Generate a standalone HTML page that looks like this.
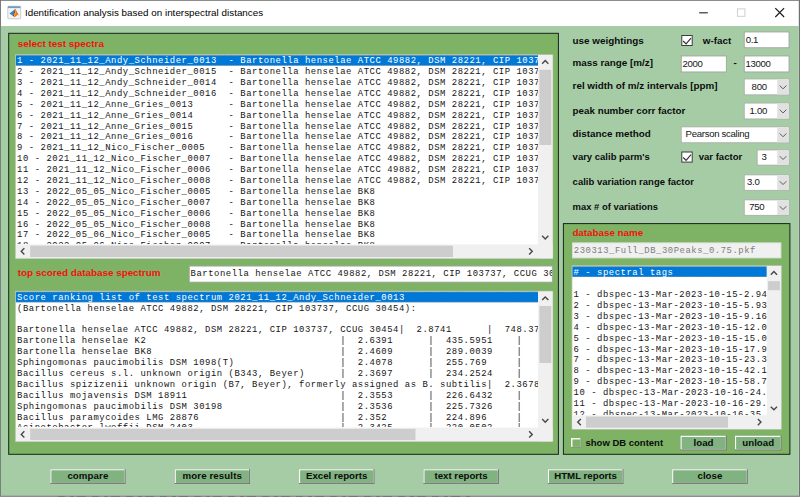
<!DOCTYPE html>
<html lang="en"><head><meta charset="utf-8"><title>Identification analysis based on interspectral distances</title>
<style>
*{box-sizing:border-box;margin:0;padding:0}
html,body{width:800px;height:497px;overflow:hidden;background:#fff}
body{position:relative;font-family:"Liberation Sans",sans-serif;color:#151515}
#shapes{position:absolute;left:0;top:0}
.t{position:absolute;white-space:pre;line-height:12px;font-size:9.6px;letter-spacing:-0.3px}
.b{font-weight:bold;font-size:9.85px;letter-spacing:0;color:#0c0c0c}
.b.red{color:#f3100c}
.red{color:#f3100c}
.c{text-align:center}
.clip{position:absolute;overflow:hidden}
.rows{position:absolute;left:0;top:0;font-family:"Liberation Mono",monospace;font-size:8.9px;letter-spacing:0.550px}
.rows div{height:10.9px;line-height:10.9px;white-space:pre}
.rows .sel{color:#fff}
.mono{font-family:"Liberation Mono",monospace;font-size:8.9px;letter-spacing:0.550px}
</style></head>
<body>
<svg id="shapes" width="800" height="497" viewBox="0 0 800 497">
<rect x="0" y="0" width="800" height="497" fill="#6f736f"/>
<rect x="0.9" y="0.8" width="797.9" height="494.8" fill="#fff"/>
<rect x="0.9" y="26" width="797.9" height="469.6" fill="#a6cca6"/>
<rect x="0" y="495.6" width="800" height="1.4" fill="#8b908b"/>
<rect x="0" y="0.8" width="0.9" height="25.2" fill="#7b7b7b"/>
<rect x="0" y="26" width="0.9" height="469.6" fill="#76837a"/>
<path d="M58 496.7 H470" stroke="#3c463c" stroke-width="0.8" fill="none" stroke-dasharray="7 5 4 3 9 6" opacity="0.5"/>
<g transform="translate(7.45,5.9)">
<rect x="0.3" y="0.3" width="12.9" height="12.6" rx="0.8" fill="#f1f3f6" stroke="#b4bbc4" stroke-width="0.7"/>
<rect x="0.5" y="0.4" width="12.5" height="1.8" fill="#6f9bc4"/>
<path d="M2.0 7.7 L7.3 3.5 L6.3 8.9 L5.0 9.5 Z" fill="#3a80c6"/>
<path d="M7.2 3.6 L7.8 2.9 L7.8 6.0 L6.3 10.7 L5.0 9.5 L6.2 8.8 Z" fill="#8a2a1c"/>
<path d="M7.8 2.9 C8.6 3.8 9.4 6.2 11.5 9.6 L10.0 8.9 L8.4 10.6 L6.0 11.4 L6.3 10.6 L7.6 6.0 Z" fill="#ec6f1c"/>
<path d="M7.9 3.6 L8.6 6.8 L7.3 10.2 L6.0 11.4 L6.8 9.0 L7.7 6 Z" fill="#f7b52c"/>
</g>
<path d="M699.2 12.8 H707.8" stroke="#333" stroke-width="1.2" fill="none"/>
<rect x="737.5" y="8.9" width="7.4" height="7.4" fill="none" stroke="#cfcfcf" stroke-width="1"/>
<path d="M775.3 8.2 L784.1 17 M784.1 8.2 L775.3 17" stroke="#1a1a1a" stroke-width="1.2" fill="none"/>
<rect x="8.7" y="33.3" width="549.7" height="421" fill="#7eb365" stroke="#16241a" stroke-width="1"/>
<rect x="15.5" y="54.8" width="537.3" height="203.8" fill="#fff" stroke="#bcc4b8" stroke-width="0.8"/>
<rect x="15.9" y="55.2" width="522.2" height="10.5" fill="#0078d7"/>
<path d="M16.1 55.5 H538.1 M16.1 65.5 H538.1" stroke="#e8a25a" stroke-width="0.6" fill="none" stroke-dasharray="0.9 0.9" opacity="0.8"/>
<rect x="538.1" y="55.2" width="14.3" height="203" fill="#f0f0f0"/>
<rect x="15.9" y="244.4" width="536.5" height="13.8" fill="#f0f0f0"/>
<rect x="539.4" y="69.8" width="11.9" height="75.2" fill="#cdcdcd"/>
<rect x="30.2" y="245.6" width="422.8" height="11.5" fill="#cdcdcd"/>
<path d="M542.15 63.65 L545.25 60.55 L548.35 63.65" stroke="#484848" stroke-width="1.4" fill="none"/>
<path d="M542.15 235.85 L545.25 238.95 L548.35 235.85" stroke="#484848" stroke-width="1.4" fill="none"/>
<path d="M24.35 248.2 L21.25 251.3 L24.35 254.4" stroke="#484848" stroke-width="1.4" fill="none"/>
<path d="M529.15 248.2 L532.25 251.3 L529.15 254.4" stroke="#484848" stroke-width="1.4" fill="none"/>
<rect x="189.25" y="266.05" width="363.1" height="16.1" fill="#fff" stroke="#9ea49e" stroke-width="0.9"/>
<rect x="15.5" y="291.2" width="537.3" height="150.4" fill="#fff" stroke="#bcc4b8" stroke-width="0.8"/>
<rect x="15.9" y="291.8" width="522.2" height="10.5" fill="#0078d7"/>
<path d="M16.1 292.1 H538.1 M16.1 302.1 H538.1" stroke="#e8a25a" stroke-width="0.6" fill="none" stroke-dasharray="0.9 0.9" opacity="0.8"/>
<rect x="538.1" y="291.6" width="14.3" height="149.6" fill="#f0f0f0"/>
<rect x="15.9" y="427.6" width="536.5" height="13.6" fill="#f0f0f0"/>
<rect x="539.4" y="306" width="11.9" height="57" fill="#cdcdcd"/>
<rect x="30.2" y="428.8" width="385.3" height="11.3" fill="#cdcdcd"/>
<path d="M542.15 300.05 L545.25 296.95 L548.35 300.05" stroke="#484848" stroke-width="1.4" fill="none"/>
<path d="M542.15 419.05 L545.25 422.15 L548.35 419.05" stroke="#484848" stroke-width="1.4" fill="none"/>
<path d="M24.35 431.3 L21.25 434.4 L24.35 437.5" stroke="#484848" stroke-width="1.4" fill="none"/>
<path d="M529.15 431.3 L532.25 434.4 L529.15 437.5" stroke="#484848" stroke-width="1.4" fill="none"/>
<rect x="681.8" y="35.5" width="10.4" height="10" fill="#fff" stroke="#3c3c3c" stroke-width="1"/>
<path d="M683.2 41 L686.1 43.9 L691 38.1" stroke="#333" stroke-width="1.15" fill="none"/>
<rect x="744.25" y="31.95" width="44.8" height="15.8" fill="#fff" stroke="#9ea49e" stroke-width="0.9"/>
<rect x="681.25" y="55.95" width="45.1" height="16" fill="#fff" stroke="#9ea49e" stroke-width="0.9"/>
<rect x="744.25" y="55.95" width="44.8" height="16" fill="#fff" stroke="#9ea49e" stroke-width="0.9"/>
<rect x="744.25" y="78.95" width="44.8" height="15.9" fill="#fff" stroke="#a9afa9" stroke-width="0.9"/>
<rect x="777.2" y="79.3" width="11.5" height="15.2" fill="#e1e1e1"/>
<path d="M779.75 85.55 L783.05 88.85 L786.35 85.55" stroke="#5a5a5a" stroke-width="1" fill="none"/>
<rect x="744.25" y="103.05" width="44.8" height="15.9" fill="#fff" stroke="#a9afa9" stroke-width="0.9"/>
<rect x="777.2" y="103.4" width="11.5" height="15.2" fill="#e1e1e1"/>
<path d="M779.75 109.65 L783.05 112.95 L786.35 109.65" stroke="#5a5a5a" stroke-width="1" fill="none"/>
<rect x="681.25" y="126.85" width="107.8" height="15.9" fill="#fff" stroke="#a9afa9" stroke-width="0.9"/>
<rect x="777.2" y="127.2" width="11.5" height="15.2" fill="#e1e1e1"/>
<path d="M779.75 133.45 L783.05 136.75 L786.35 133.45" stroke="#5a5a5a" stroke-width="1" fill="none"/>
<rect x="681.8" y="152" width="10.4" height="10.1" fill="#fff" stroke="#3c3c3c" stroke-width="1"/>
<path d="M683.2 157.5 L686.1 160.4 L691 154.6" stroke="#333" stroke-width="1.15" fill="none"/>
<rect x="757.15" y="149.95" width="31.9" height="15.2" fill="#fff" stroke="#a9afa9" stroke-width="0.9"/>
<rect x="777.2" y="150.3" width="11.5" height="14.5" fill="#e1e1e1"/>
<path d="M779.75 156.2 L783.05 159.5 L786.35 156.2" stroke="#5a5a5a" stroke-width="1" fill="none"/>
<rect x="744.25" y="174.85" width="44.8" height="15.5" fill="#fff" stroke="#a9afa9" stroke-width="0.9"/>
<rect x="777.2" y="175.2" width="11.5" height="14.8" fill="#e1e1e1"/>
<path d="M779.75 181.25 L783.05 184.55 L786.35 181.25" stroke="#5a5a5a" stroke-width="1" fill="none"/>
<rect x="744.25" y="199.85" width="44.8" height="15.5" fill="#fff" stroke="#a9afa9" stroke-width="0.9"/>
<rect x="777.2" y="200.2" width="11.5" height="14.8" fill="#e1e1e1"/>
<path d="M779.75 206.25 L783.05 209.55 L786.35 206.25" stroke="#5a5a5a" stroke-width="1" fill="none"/>
<rect x="563.4" y="223.6" width="226.5" height="230.7" fill="#7eb365" stroke="#16241a" stroke-width="1"/>
<rect x="572.45" y="242.85" width="208.5" height="15.1" fill="#f0f0f0" stroke="#d9dfd5" stroke-width="0.9"/>
<rect x="572" y="265.8" width="209.4" height="163.4" fill="#fff" stroke="#bcc4b8" stroke-width="0.8"/>
<rect x="572.4" y="266.4" width="194.4" height="10.5" fill="#0078d7"/>
<path d="M572.6 266.7 H766.8 M572.6 276.7 H766.8" stroke="#e8a25a" stroke-width="0.6" fill="none" stroke-dasharray="0.9 0.9" opacity="0.8"/>
<rect x="766.8" y="266.2" width="14.2" height="162.6" fill="#f0f0f0"/>
<rect x="572.4" y="415.3" width="208.6" height="13.5" fill="#f0f0f0"/>
<rect x="768.1" y="281.2" width="11.8" height="9" fill="#cdcdcd"/>
<rect x="586" y="416.5" width="142" height="11.2" fill="#cdcdcd"/>
<path d="M770.8 274.65 L773.9 271.55 L777 274.65" stroke="#484848" stroke-width="1.4" fill="none"/>
<path d="M770.8 406.75 L773.9 409.85 L777 406.75" stroke="#484848" stroke-width="1.4" fill="none"/>
<path d="M580.85 418.95 L577.75 422.05 L580.85 425.15" stroke="#484848" stroke-width="1.4" fill="none"/>
<path d="M757.85 418.95 L760.95 422.05 L757.85 425.15" stroke="#484848" stroke-width="1.4" fill="none"/>
<rect x="571" y="438" width="10.3" height="9.8" fill="#8d908d"/>
<rect x="571" y="438" width="9.4" height="8.9" fill="#f7f7f7"/>
<rect x="572.5" y="439.5" width="7.9" height="7.4" fill="#7eb365"/>
<rect x="680.5" y="435.7" width="46.1" height="14.6" fill="#6a6f6a"/>
<rect x="680.5" y="435.7" width="45.2" height="13.7" fill="#fbfdfb"/>
<rect x="681.8" y="437" width="43.9" height="12.4" fill="#9aa89a"/>
<rect x="681.8" y="437" width="43" height="11.5" fill="#80b380"/>
<rect x="735" y="435.7" width="46.4" height="14.6" fill="#6a6f6a"/>
<rect x="735" y="435.7" width="45.5" height="13.7" fill="#fbfdfb"/>
<rect x="736.3" y="437" width="44.2" height="12.4" fill="#9aa89a"/>
<rect x="736.3" y="437" width="43.3" height="11.5" fill="#80b380"/>
<rect x="50.3" y="469.2" width="75.2" height="14.8" fill="#6a6f6a"/>
<rect x="50.3" y="469.2" width="74.3" height="13.9" fill="#fbfdfb"/>
<rect x="51.6" y="470.5" width="73" height="12.6" fill="#9aa89a"/>
<rect x="51.6" y="470.5" width="72.1" height="11.7" fill="#80b380"/>
<rect x="174.6" y="469.2" width="75.4" height="14.8" fill="#6a6f6a"/>
<rect x="174.6" y="469.2" width="74.5" height="13.9" fill="#fbfdfb"/>
<rect x="175.9" y="470.5" width="73.2" height="12.6" fill="#9aa89a"/>
<rect x="175.9" y="470.5" width="72.3" height="11.7" fill="#80b380"/>
<rect x="299" y="469.2" width="75.4" height="14.8" fill="#6a6f6a"/>
<rect x="299" y="469.2" width="74.5" height="13.9" fill="#fbfdfb"/>
<rect x="300.3" y="470.5" width="73.2" height="12.6" fill="#9aa89a"/>
<rect x="300.3" y="470.5" width="72.3" height="11.7" fill="#80b380"/>
<rect x="423.4" y="469.2" width="75.4" height="14.8" fill="#6a6f6a"/>
<rect x="423.4" y="469.2" width="74.5" height="13.9" fill="#fbfdfb"/>
<rect x="424.7" y="470.5" width="73.2" height="12.6" fill="#9aa89a"/>
<rect x="424.7" y="470.5" width="72.3" height="11.7" fill="#80b380"/>
<rect x="547.8" y="469.2" width="75.6" height="14.8" fill="#6a6f6a"/>
<rect x="547.8" y="469.2" width="74.7" height="13.9" fill="#fbfdfb"/>
<rect x="549.1" y="470.5" width="73.4" height="12.6" fill="#9aa89a"/>
<rect x="549.1" y="470.5" width="72.5" height="11.7" fill="#80b380"/>
<rect x="672.1" y="469.2" width="75.6" height="14.8" fill="#6a6f6a"/>
<rect x="672.1" y="469.2" width="74.7" height="13.9" fill="#fbfdfb"/>
<rect x="673.4" y="470.5" width="73.4" height="12.6" fill="#9aa89a"/>
<rect x="673.4" y="470.5" width="72.5" height="11.7" fill="#80b380"/>
</svg>
<div class="t " style="left:24.9px;top:7px;font-size:9.8px;color:#000;letter-spacing:0.035px">Identification analysis based on interspectral distances</div>
<div class="t b red" style="left:17.7px;top:37.7px;font-size:9.9px">select test spectra</div>
<div class="clip" style="left:16px;top:55.2px;width:522.1px;height:189.2px"><div class="rows" style="left:1px;top:1px">
<div class="sel">1 - 2021_11_12_Andy_Schneider_0013  - Bartonella henselae ATCC 49882, DSM 28221, CIP 103737, CCUG 30454</div><div>2 - 2021_11_12_Andy_Schneider_0015  - Bartonella henselae ATCC 49882, DSM 28221, CIP 103737, CCUG 30454</div><div>3 - 2021_11_12_Andy_Schneider_0014  - Bartonella henselae ATCC 49882, DSM 28221, CIP 103737, CCUG 30454</div><div>4 - 2021_11_12_Andy_Schneider_0016  - Bartonella henselae ATCC 49882, DSM 28221, CIP 103737, CCUG 30454</div><div>5 - 2021_11_12_Anne_Gries_0013      - Bartonella henselae ATCC 49882, DSM 28221, CIP 103737, CCUG 30454</div><div>6 - 2021_11_12_Anne_Gries_0014      - Bartonella henselae ATCC 49882, DSM 28221, CIP 103737, CCUG 30454</div><div>7 - 2021_11_12_Anne_Gries_0015      - Bartonella henselae ATCC 49882, DSM 28221, CIP 103737, CCUG 30454</div><div>8 - 2021_11_12_Anne_Gries_0016      - Bartonella henselae ATCC 49882, DSM 28221, CIP 103737, CCUG 30454</div><div>9 - 2021_11_12_Nico_Fischer_0005    - Bartonella henselae ATCC 49882, DSM 28221, CIP 103737, CCUG 30454</div><div>10 - 2021_11_12_Nico_Fischer_0007   - Bartonella henselae ATCC 49882, DSM 28221, CIP 103737, CCUG 30454</div><div>11 - 2021_11_12_Nico_Fischer_0006   - Bartonella henselae ATCC 49882, DSM 28221, CIP 103737, CCUG 30454</div><div>12 - 2021_11_12_Nico_Fischer_0008   - Bartonella henselae ATCC 49882, DSM 28221, CIP 103737, CCUG 30454</div><div>13 - 2022_05_05_Nico_Fischer_0005   - Bartonella henselae BK8</div><div>14 - 2022_05_05_Nico_Fischer_0007   - Bartonella henselae BK8</div><div>15 - 2022_05_05_Nico_Fischer_0006   - Bartonella henselae BK8</div><div>16 - 2022_05_05_Nico_Fischer_0008   - Bartonella henselae BK8</div><div>17 - 2022_05_06_Nico_Fischer_0005   - Bartonella henselae BK8</div><div>18 - 2022_05_06_Nico_Fischer_0007   - Bartonella henselae BK8</div><div>19 - 2022_05_06_Nico_Fischer_0006   - Bartonella henselae BK8</div>
</div></div>
<div class="t b red" style="left:17.7px;top:267.2px;font-size:9.85px">top scored database spectrum</div>
<div class="clip" style="left:189.8px;top:266.6px;width:362px;height:15px"><div class="t mono" style="left:0.8px;top:1.7px;">Bartonella henselae ATCC 49882, DSM 28221, CIP 103737, CCUG 30454</div></div>
<div class="clip" style="left:16px;top:291.8px;width:522.1px;height:135px"><div class="rows" style="left:1px;top:1px">
<div class="sel">Score ranking list of test spectrum 2021_11_12_Andy_Schneider_0013</div><div>(Bartonella henselae ATCC 49882, DSM 28221, CIP 103737, CCUG 30454):</div><div>&nbsp;</div><div>Bartonella henselae ATCC 49882, DSM 28221, CIP 103737, CCUG 30454|  2.8741      |  748.3717    |  </div><div>Bartonella henselae K2                                 |  2.6391      |  435.5951    |  </div><div>Bartonella henselae BK8                                |  2.4609      |  289.0039    |  </div><div>Sphingomonas paucimobilis DSM 1098(T)                  |  2.4078      |  255.769     |  </div><div>Bacillus cereus s.l. unknown origin (B343, Beyer)      |  2.3697      |  234.2524    |  </div><div>Bacillus spizizenii unknown origin (B7, Beyer), formerly assigned as B. subtilis|  2.3678      |  233.2345    |  </div><div>Bacillus mojavensis DSM 18911                          |  2.3553      |  226.6432    |  </div><div>Sphingomonas paucimobilis DSM 30198                    |  2.3536      |  225.7326    |  </div><div>Bacillus paramycoides LMG 28876                        |  2.352       |  224.896     |  </div><div>Acinetobacter lwoffii DSM 2403                         |  2.3425      |  220.0502    |  </div><div>Bacillus subtilis DSM 10                               |  2.3301      |  213.8562    |  </div>
</div></div>
<div class="t b" style="left:572.6px;top:34.6px;font-size:9.85px">use weightings</div>
<div class="t b" style="left:702.8px;top:34.6px;font-size:9.85px">w-fact</div>
<div class="t b" style="left:572.6px;top:57.1px;font-size:9.85px">mass range [m/z]</div>
<div class="t b" style="left:733.5px;top:57.1px;font-size:9.85px">-</div>
<div class="t b" style="left:572.6px;top:80.2px;font-size:9.85px">rel width of m/z intervals [ppm]</div>
<div class="t b" style="left:572.6px;top:104.6px;font-size:9.8px">peak number corr factor</div>
<div class="t b" style="left:572.6px;top:127.8px;font-size:9.85px">distance method</div>
<div class="t b" style="left:572.6px;top:150.7px;font-size:9.5px">vary calib parm's</div>
<div class="t b" style="left:698.7px;top:150.7px;font-size:9.55px">var factor</div>
<div class="t b" style="left:572.6px;top:175.9px;font-size:9.5px">calib variation range factor</div>
<div class="t b" style="left:572.6px;top:201px;font-size:9.45px">max # of variations</div>
<div class="clip" style="left:744.8px;top:32.5px;width:43.7px;height:14.7px"><div class="t " style="left:0.9px;top:1.55px;">0.1</div></div>
<div class="clip" style="left:681.8px;top:56.5px;width:44px;height:14.9px"><div class="t " style="left:0.6px;top:1.65px;">2000</div></div>
<div class="clip" style="left:744.8px;top:56.5px;width:43.7px;height:14.9px"><div class="t " style="left:0.6px;top:1.65px;">13000</div></div>
<div class="t " style="left:751.6px;top:80.5px;">800</div>
<div class="t " style="left:749.5px;top:104.6px;">1.00</div>
<div class="t " style="left:685.6px;top:128.4px;">Pearson scaling</div>
<div class="t " style="left:761.5px;top:151.15px;">3</div>
<div class="t " style="left:747px;top:176.2px;">3.0</div>
<div class="t " style="left:749.3px;top:201.2px;">750</div>
<div class="t b red" style="left:572.4px;top:226.8px;font-size:9.8px">database name</div>
<div class="clip" style="left:573px;top:243.4px;width:207.4px;height:14px"><div class="t mono" style="left:0.8px;top:1.2px;color:#7d7d7d">230313_Full_DB_30Peaks_0.75.pkf</div></div>
<div class="clip" style="left:572.5px;top:266.4px;width:194.3px;height:148.9px"><div class="rows" style="left:1px;top:1.9px">
<div class="sel"># - spectral tags</div><div>&nbsp;</div><div>1 - dbspec-13-Mar-2023-10-15-2.94</div><div>2 - dbspec-13-Mar-2023-10-15-5.93</div><div>3 - dbspec-13-Mar-2023-10-15-9.16</div><div>4 - dbspec-13-Mar-2023-10-15-12.0</div><div>5 - dbspec-13-Mar-2023-10-15-15.0</div><div>6 - dbspec-13-Mar-2023-10-15-17.9</div><div>7 - dbspec-13-Mar-2023-10-15-23.3</div><div>8 - dbspec-13-Mar-2023-10-15-42.1</div><div>9 - dbspec-13-Mar-2023-10-15-58.7</div><div>10 - dbspec-13-Mar-2023-10-16-24.1</div><div>11 - dbspec-13-Mar-2023-10-16-29.3</div><div>12 - dbspec-13-Mar-2023-10-16-35.2</div><div>13 - dbspec-13-Mar-2023-10-16-41.0</div>
</div></div>
<div class="t b" style="left:585.5px;top:436.8px;font-size:9.5px">show DB content</div>
<div class="t c b" style="left:680.5px;width:46.1px;top:436.8px;font-size:9.7px;letter-spacing:0px">load</div>
<div class="t c b" style="left:735px;width:46.4px;top:436.8px;font-size:9.7px;letter-spacing:0px">unload</div>
<div class="t c b" style="left:50.3px;width:75.2px;top:470.4px;font-size:9.7px;letter-spacing:0.08px">compare</div>
<div class="t c b" style="left:174.6px;width:75.4px;top:470.4px;font-size:9.7px;letter-spacing:0.1px">more results</div>
<div class="t c b" style="left:299px;width:75.4px;top:470.4px;font-size:9.7px;letter-spacing:0px">Excel reports</div>
<div class="t c b" style="left:423.4px;width:75.4px;top:470.4px;font-size:9.7px;letter-spacing:0px">text reports</div>
<div class="t c b" style="left:547.8px;width:75.6px;top:470.4px;font-size:9.7px;letter-spacing:0px">HTML reports</div>
<div class="t c b" style="left:672.1px;width:75.6px;top:470.4px;font-size:9.7px;letter-spacing:0px">close</div>
</body></html>
